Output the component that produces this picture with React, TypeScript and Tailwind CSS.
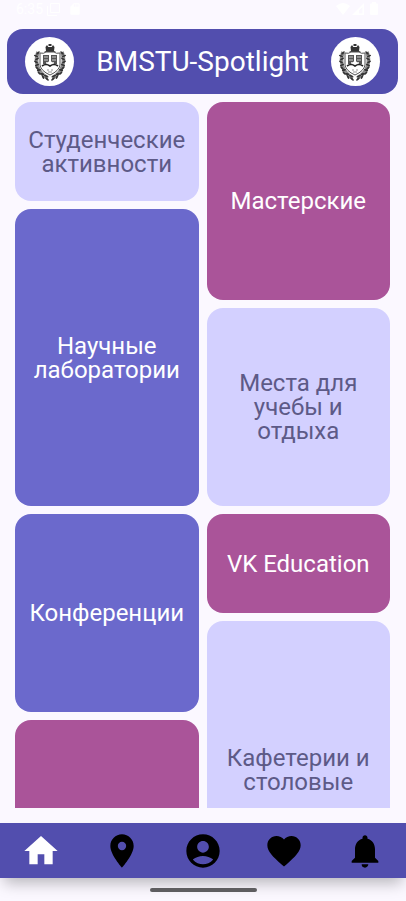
import React from "react";
import {
  MdAccountCircle,
  MdFavorite,
  MdHome,
  MdLocationOn,
  MdNotifications,
  MdSdCard,
} from "react-icons/md";

type Tile = { title: string; size: string; tone: string };

const light = "bg-[#d3d0ff] text-[#5d5a87]";
const violet = "bg-[#6b69cc] text-white";
const magenta = "bg-[#aa5499] text-white";

const small = "h-[99px]";
const medium = "h-[198px]";
const large = "h-[297px]";

const leftTiles: Tile[] = [
  { title: "Студенческие активности", size: small, tone: light },
  { title: "Научные лаборатории", size: large, tone: violet },
  { title: "Конференции", size: medium, tone: violet },
  { title: "", size: large, tone: magenta },
];

const rightTiles: Tile[] = [
  { title: "Мастерские", size: medium, tone: magenta },
  { title: "Места для учебы и отдыха", size: medium, tone: light },
  { title: "VK Education", size: small, tone: magenta },
  { title: "Кафетерии и столовые", size: large, tone: light },
];

const leaves = [
  [-12, -9, -40], [-14, -6, 20], [-13, -3, -30], [-14, 0, 30], [-13, 3, -20],
  [-13, 6, 40], [-11, 8, -10], [-11, 11, 50], [-8, 12, 10], [-7, 15, 60], [-4, 14, 20], [-3, 17, 40],
];

function Emblem() {
  return (
    <span className="flex size-[49px] shrink-0 items-center justify-center rounded-full bg-white">
      <svg viewBox="-17 -19 34 38" className="h-[38px] w-[34px]" aria-hidden="true">
        <g fill="#333">
          {[1, -1].map((side) => (
            <g key={side} transform={`scale(${side} 1)`}>
              <path
                d="M-12-10C-15-2-14 10-2 16"
                fill="none"
                stroke="#8a8a8a"
                strokeWidth="3.6"
              />
              {leaves.map(([x, y, turn]) => (
                <ellipse
                  key={`${x},${y}`}
                  cx={x}
                  cy={y}
                  rx="2.2"
                  ry="0.9"
                  transform={`rotate(${turn} ${x} ${y})`}
                />
              ))}
              <path d="M-1-14-3-17-4.500-15-4-11-6-10-1-9z" />
            </g>
          ))}
          <path d="M-1.500-18h3v2h-3zM-2-15h4v6h-4z" />
        </g>
        <path
          d="M-10-9Q-6-8-4-10H4Q6-8 10-9V3Q9 9 0 13Q-9 9-10 3z"
          fill="#fff"
          stroke="#555"
          strokeWidth="1"
        />
        <path d="M-7-7H-1V-1L-3 2H-7zM1-7H7V2H3L1-1z" fill="#555" />
        <path d="M-6-5h4M2-5h4M-6-2h4M2-2h4" stroke="#ccc" strokeWidth="1" />
        <path d="M0-7V3M-4 1H4" stroke="#fff" strokeWidth="1.6" />
        <path d="M-8 4Q-4 1 0 4Q4 1 8 4" stroke="#222" strokeWidth="1.6" fill="none" />
        <path d="M-3 8h2M1 8h2M-2 10h4" stroke="#999" strokeWidth="1.2" />
      </svg>
    </span>
  );
}

function StatusBar() {
  return (
    <div className="flex h-[29px] shrink-0 items-start justify-between pl-4 pr-7 pt-[2px] text-white">
      <div className="flex items-center gap-1">
        <span className="text-sm leading-[14px]">6:35</span>
        <svg viewBox="0 0 13 13" className="size-[13px]" fill="none" stroke="currentColor" aria-hidden="true">
          <path d="M3.500.5h9v9h-9zM.5 3v9.500H10" />
        </svg>
        <MdSdCard className="ml-1 size-[14px]" aria-hidden="true" />
      </div>
      <div className="flex items-center gap-[2px]">
        <svg viewBox="0 0 14 12" className="h-3 w-[14px]" fill="currentColor" aria-hidden="true">
          <path d="M0 3Q7-3 14 3L7 12z" />
        </svg>
        <svg viewBox="0 0 12 12" className="size-3" fill="currentColor" aria-hidden="true">
          <path fillRule="evenodd" d="M12 0V12H0zM10.500 4v6.500H7V7.500z" />
        </svg>
        <svg viewBox="0 0 8 13" className="ml-1 h-[13px] w-2" fill="currentColor" aria-hidden="true">
          <path d="M2 0h4v1.500h1q1 0 1 1V12q0 1-1 1H1q-1 0-1-1V2.500q0-1 1-1h1z" />
        </svg>
      </div>
    </div>
  );
}

function Column({ tiles }: { tiles: Tile[] }) {
  return (
    <div className="flex min-w-0 flex-1 flex-col gap-2">
      {tiles.map(({ title, size, tone }, index) => (
        <button
          key={index}
          type="button"
          className={`flex shrink-0 items-center justify-center rounded-2xl px-2 text-center text-2xl leading-6 ${size} ${tone}`}
        >
          {title}
        </button>
      ))}
    </div>
  );
}

const tabs = [
  { label: "Главная", Icon: MdHome, color: "text-white" },
  { label: "Карта", Icon: MdLocationOn, color: "text-black" },
  { label: "Профиль", Icon: MdAccountCircle, color: "text-black" },
  { label: "Избранное", Icon: MdFavorite, color: "text-black" },
  { label: "Уведомления", Icon: MdNotifications, color: "text-black" },
];

export default function App() {
  return (
    <div className="flex h-screen flex-col overflow-hidden bg-[#fbf8ff] font-[Roboto,sans-serif]">
      <StatusBar />
      <header className="ml-[7px] mr-2 flex h-[65px] shrink-0 items-center justify-between rounded-2xl bg-[#524eae] px-[18px]">
        <Emblem />
        <h1 className="text-[28px] leading-9 text-white">BMSTU-Spotlight</h1>
        <Emblem />
      </header>
      <main className="mb-[15px] mt-2 flex min-h-0 flex-1 gap-2 overflow-hidden pl-[15px] pr-4">
        <Column tiles={leftTiles} />
        <Column tiles={rightTiles} />
      </main>
      <nav className="flex h-[55px] shrink-0 bg-[#524eae] shadow-[0_9px_14px_-4px_rgba(0,0,0,0.27)]">
        {tabs.map(({ label, Icon, color }) => (
          <button
            key={label}
            type="button"
            aria-label={label}
            className={`flex flex-1 items-center justify-center ${color}`}
          >
            <Icon className="size-10" />
          </button>
        ))}
      </nav>
      <div className="z-10 flex h-[23px] shrink-0 items-center justify-center">
        <span className="h-1 w-[107px] rounded-full bg-[#5e5d60]" />
      </div>
    </div>
  );
}
